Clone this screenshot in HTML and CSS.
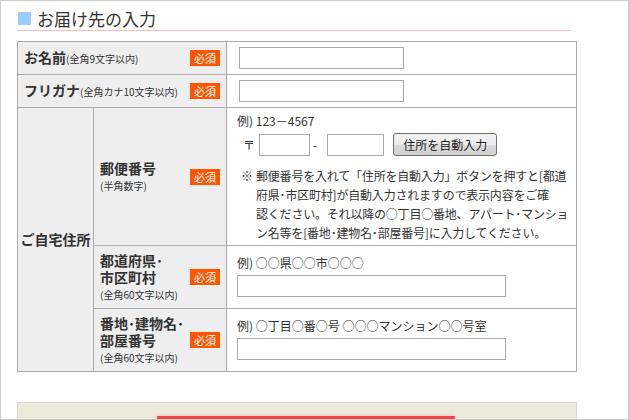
FILE: index.html
```html
<!DOCTYPE html>
<html lang="ja">
<head>
<meta charset="utf-8">
<title>お届け先の入力</title>
<link rel="stylesheet" href="styles.css">
</head>
<body>
<div class="frame">
  <h2 class="title"><span class="sq"></span>お届け先の入力</h2>
  <table class="form">
    <colgroup><col class="c1"><col class="c2"><col class="c3"></colgroup>
    <tr>
      <th colspan="2" class="hcell"><div class="hd"><span class="lbl">お名前<small>(全角9文字以内)</small></span><span class="req">必須</span></div></th>
      <td class="val short"><input class="txt name" type="text"></td>
    </tr>
    <tr>
      <th colspan="2" class="hcell"><div class="hd"><span class="lbl">フリガナ<small>(全角カナ10文字以内)</small></span><span class="req">必須</span></div></th>
      <td class="val short"><input class="txt name" type="text"></td>
    </tr>
    <tr>
      <th rowspan="3" class="group">ご自宅住所</th>
      <th class="hcell"><div class="hd"><span class="lbl stack">郵便番号<small>(半角数字)</small></span><span class="req">必須</span></div></th>
      <td class="val zip">
        <div class="ex">例) 123－4567</div>
        <div class="ziprow">
          <span class="mark">〒</span>
          <input class="txt z1" type="text">
          <span class="dash">-</span>
          <input class="txt z2" type="text">
          <button class="btn" type="button">住所を自動入力</button>
        </div>
        <div class="note"><span class="kome">※</span><span class="ntext">郵便番号を入れて「住所を自動入力」ボタンを押すと[都道<br>府県･市区町村]が自動入力されますので表示内容をご確<br>認ください。それ以降の○丁目○番地、アパート･マンショ<br>ン名等を[番地･建物名･部屋番号]に入力してください。</span></div>
      </td>
    </tr>
    <tr>
      <th class="hcell"><div class="hd"><span class="lbl stack">都道府県･<br>市区町村<small>(全角60文字以内)</small></span><span class="req">必須</span></div></th>
      <td class="val addr">
        <div class="ex">例) ○○県○○市○○○</div>
        <input class="txt wide" type="text">
      </td>
    </tr>
    <tr>
      <th class="hcell"><div class="hd"><span class="lbl stack">番地･建物名･<br>部屋番号<small>(全角60文字以内)</small></span><span class="req">必須</span></div></th>
      <td class="val addr">
        <div class="ex">例) ○丁目○番○号 ○○○マンション○○号室</div>
        <input class="txt wide" type="text">
      </td>
    </tr>
  </table>
  <div class="submitbox"><div class="redbar"></div></div>
</div>
</body>
</html>
```

FILE: styles.css
```css
* { box-sizing: border-box; }
html, body { margin: 0; padding: 0; background: #fff; }
body {
  font-family: "Noto Sans CJK JP", "Noto Sans", sans-serif;
  color: #333;
}
.frame {
  width: 630px;
  height: 420px;
  border: 1px solid #cccccc;
  border-right-width: 2px;
  padding-left: 16px;
  overflow: hidden;
}
.title {
  margin: 0 6px 0 0;
  width: 554px;
  height: 30px;
  padding-top: 6px;
  border-bottom: 1px solid #ffbcbc;
  display: flex;
  align-items: center;
  font-size: 17px;
  font-weight: normal;
  line-height: 23px;
  color: #333;
}
.sq {
  width: 13px;
  height: 13px;
  background: #99ccff;
  margin-left: 1px;
  margin-right: 6px;
  flex: none;
}
.form {
  margin-top: 10px;
  width: 560px;
  table-layout: fixed;
  border-collapse: collapse;
  font-size: 12px;
}
.c1 { width: 76px; }
.c2 { width: 133px; }
.form th, .form td {
  border: 1px solid #aaaaaa;
}
.hcell {
  background: #eeeeee;
  padding: 0 6px;
  text-align: left;
  font-weight: normal;
  vertical-align: middle;
}
.group {
  background: #eeeeee;
  padding: 0;
  text-align: center;
  font-size: 14px;
  font-weight: bold;
  vertical-align: middle;
  line-height: 17px;
}
.hd {
  display: flex;
  align-items: center;
  justify-content: space-between;
}
.lbl {
  font-size: 14px;
  font-weight: bold;
  line-height: 17px;
  color: #333;
  white-space: nowrap;
}
.lbl small {
  font-size: 10px;
  font-weight: normal;
}
.lbl.stack small {
  display: block;
  line-height: 17px;
}
.req {
  flex: none;
  width: 30px;
  height: 16px;
  background: #ff5500;
  color: #fff;
  font-size: 11px;
  line-height: 16px;
  text-align: center;
}
.val {
  background: #fff;
  vertical-align: top;
  padding: 0 10px;
}
.val.short { padding: 5px 10px 5px 12px; }
.val.zip { padding: 3px 10px 3px 10px; }
.val.addr { padding: 7px 10px 11px 10px; }
.txt {
  display: block;
  height: 22px;
  border: 1px solid #aaaaaa;
  border-radius: 0;
  padding: 0 4px;
  background: #fff;
  font: inherit;
  margin: 0;
}
.name { width: 165px; }
.ex {
  line-height: 19px;
  white-space: nowrap;
}
.ziprow {
  display: flex;
  align-items: center;
  margin-top: 3px;
  height: 23px;
}
.mark { margin-left: 6px; width: 16px; }
.z1 { width: 51px; }
.z2 { width: 57px; }
.dash { margin: 0 10px 0 3px; }
.btn {
  margin-left: 9px;
  width: 104px;
  height: 23px;
  padding: 0;
  font: inherit;
  font-size: 12px;
  color: #222;
  border: 1px solid #707070;
  border-radius: 3px;
  background: linear-gradient(#f2f2f2, #ebebeb 50%, #dddddd 51%, #cfcfcf);
}
.note {
  display: flex;
  margin-top: 10px;
  margin-left: 4px;
  line-height: 19px;
  white-space: nowrap;
}
.kome { width: 15px; flex: none; }
.ntext { letter-spacing: -0.2px; }
.wide { width: 269px; margin-top: 3px; }
.submitbox {
  margin-top: 30px;
  width: 560px;
  height: 60px;
  background: #edeadb;
  border: 1px solid #d8d6cc;
  padding: 13px 0 0 139px;
}
.redbar {
  width: 298px;
  height: 30px;
  background: #f04646;
  box-shadow: 0 0 4px rgba(0,0,0,0.15);
}
```
